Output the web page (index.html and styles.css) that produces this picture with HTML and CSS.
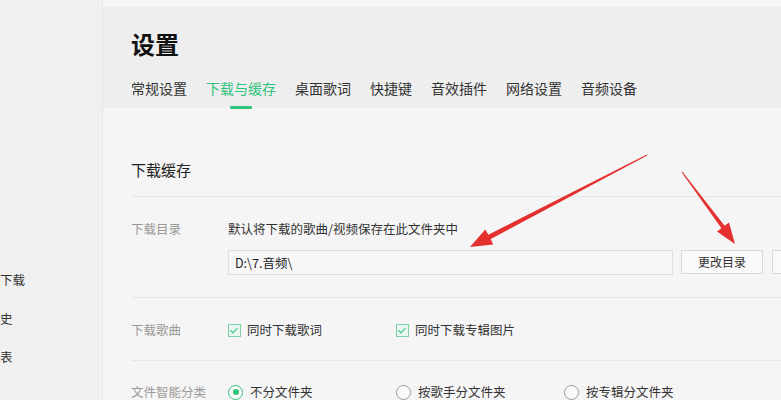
FILE: index.html
```html
<!DOCTYPE html>
<html>
<head>
<meta charset="utf-8" />
<title>设置</title>
<link rel="stylesheet" href="styles.css">
</head>
<body>
	<div id="app">
		<div class="side">
			<ul class="side_list">
				<li>下载</li>
				<li>史</li>
				<li>表</li>
			</ul>
		</div>
		<div class="main">
			<div class="topbar"></div>
			<div class="head">
				<h1 class="head_title">设置</h1>
				<ul class="tabs">
					<li>常规设置</li>
					<li class="on">下载与缓存</li>
					<li>桌面歌词</li>
					<li>快捷键</li>
					<li>音效插件</li>
					<li>网络设置</li>
					<li>音频设备</li>
				</ul>
			</div>
			<div class="content">
				<h2 class="sec_title">下载缓存</h2>
				<div class="row row_dir">
					<span class="row_label">下载目录</span>
					<div class="row_body">
						<p class="row_txt">默认将下载的歌曲/视频保存在此文件夹中</p>
						<div class="dir_line">
							<div class="dir_input">D:\7.音频\</div>
							<span class="btn">更改目录</span>
							<span class="btn btn_cut"></span>
						</div>
					</div>
				</div>
				<div class="row">
					<span class="row_label">下载歌曲</span>
					<div class="row_body opts">
						<span class="opt"><i class="check"></i>同时下载歌词</span>
						<span class="opt"><i class="check"></i>同时下载专辑图片</span>
					</div>
				</div>
				<div class="row row_last">
					<span class="row_label">文件智能分类</span>
					<div class="row_body opts">
						<span class="opt"><i class="radio on"></i>不分文件夹</span>
						<span class="opt"><i class="radio"></i>按歌手分文件夹</span>
						<span class="opt"><i class="radio"></i>按专辑分文件夹</span>
					</div>
				</div>
			</div>
		</div>
	</div>
	<svg class="marks" width="781" height="400" viewBox="0 0 781 400">
		<polygon points="647.2,155.4 490.7,239.1 493.2,244.5 470,247 485.3,229.4 488.3,234.7 646.8,154.6" />
		<polygon points="682.4,171.7 724.6,225.8 729,222.4 735,244 717,231.6 721.4,228.2 681.6,172.3" />
	</svg>
</body>
</html>
```

FILE: styles.css
```css
*{ padding:0; margin:0; box-sizing:border-box; }
ul, li{ list-style:none; }
html, body{ width:781px; height:400px; overflow:hidden; }
body{ font-family:"Noto Sans CJK SC", "Liberation Sans", sans-serif; font-size:12.5px; color:#333; background:#f5f5f5; position:relative; }
h1, h2{ font-weight:normal; }

#app{ display:flex; height:400px; }

/* left column, only the clipped ends of the items show */
.side{ width:103px; flex:none; background:#f0f0f0; border-right:1px solid #e6e6e6; padding-top:268px; }
.side_list li{ height:38.5px; line-height:24px; font-size:12.5px; color:#333; }

.main{ flex:1; display:flex; flex-direction:column; overflow:hidden; }
.topbar{ height:7px; flex:none; background:#f6f6f6; }
.head{ flex:none; background:#eeeeee; padding:22px 0 0 28px; height:101px; }
.head_title{ font-size:24px; font-weight:bold; line-height:30px; color:#111; }
.tabs{ display:flex; gap:19px; margin-top:19px; }
.tabs li{ position:relative; font-size:14px; line-height:20px; height:30px; color:#333; }
.tabs li.on{ color:#31c27c; }
.tabs li.on:after{ content:""; position:absolute; left:50%; bottom:-1px; width:22px; height:3px; margin-left:-11px; background:#31c27c; border-radius:1px; }

.content{ flex:none; background:#f5f5f5; padding-left:28px; }
.sec_title{ font-size:15px; line-height:22px; color:#222; padding:51px 0 15px; border-bottom:1px solid #e6e6e6; }

.row{ display:flex; padding:22px 0 20px; border-bottom:1px solid #e6e6e6; }
.row_dir{ padding-bottom:22px; }
.row_last{ border-bottom:none; padding-top:21px; }
.row_label{ width:97px; flex:none; line-height:20px; color:#999; }
.row_body{ flex:1; }
.row_txt{ line-height:20px; }
.dir_line{ display:flex; margin-top:11px; }
.dir_input{ width:445px; height:25px; line-height:23px; padding-left:6px; border:1px solid #e0e0e0; background:#f7f7f7; color:#222; flex:none; }
.btn{ width:82px; height:24px; margin-left:8px; line-height:22px; text-align:center; border:1px solid #d9d9d9; background:#f9f9f9; font-size:12px; color:#333; flex:none; }
.btn_cut{ margin-left:9px; }

.opts{ display:flex; line-height:20px; }
.opt{ width:168px; flex:none; display:flex; align-items:center; }
.check{ width:13px; height:13px; margin-right:6px; border:1px solid #7fd1a9; background:#e9f7f0; position:relative; }
.check:after{ content:""; position:absolute; left:3px; top:1.5px; width:3px; height:6px; border:solid #31c27c; border-width:0 1.5px 1.5px 0; transform:rotate(45deg); }
.radio{ width:15px; height:15px; margin-right:7px; border:1px solid #9a9a9a; border-radius:50%; background:#fafafa; position:relative; }
.radio.on{ border-color:#31c27c; }
.radio.on:after{ content:""; position:absolute; left:3.5px; top:3.5px; width:6px; height:6px; border-radius:50%; background:#31c27c; }

/* red arrows drawn over the screenshot */
.marks{ position:absolute; left:0; top:0; pointer-events:none; }
.marks polygon{ fill:#e53030; }
```
